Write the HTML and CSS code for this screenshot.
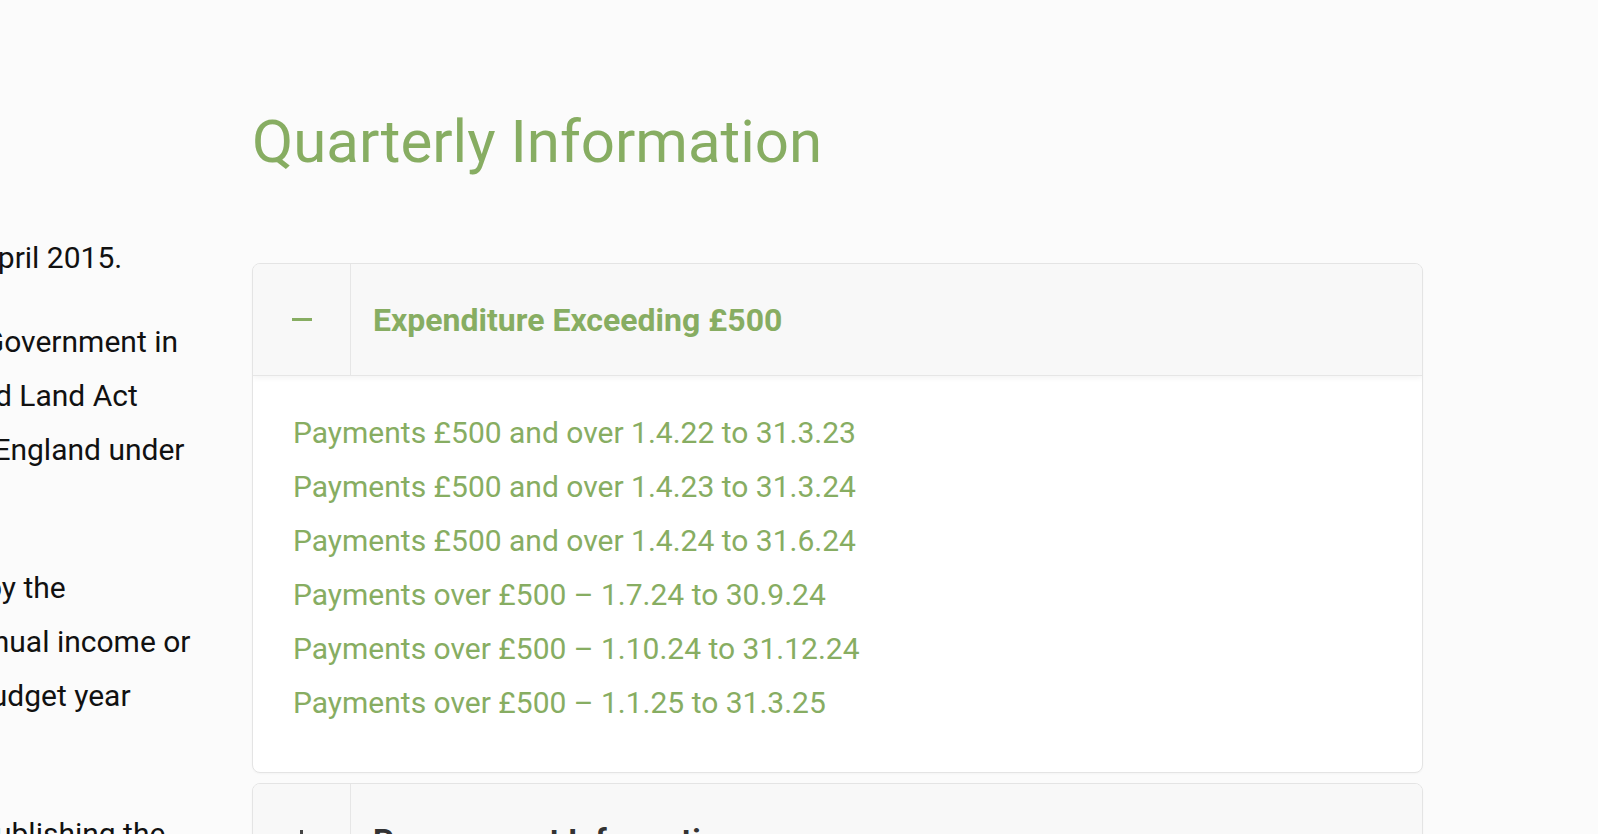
FILE: index.html
```html
<!DOCTYPE html>
<html lang="en">
<head>
<meta charset="utf-8">
<title>Quarterly Information</title>
<link rel="stylesheet" href="styles.css">
</head>
<body>
<div class="layout">
  <aside class="sidebar">
    <p><span class="ln">The Transparency Code for small authorities came into force on 1 April 2015.</span></p>
    <p>
      <span class="ln">It was issued by the Secretary of State for Communities and Local Government in</span>
      <span class="ln">exercise of powers under s. 2 of the Local Government, Planning and Land Act</span>
      <span class="ln">1980 on the publication of information by the smaller authorities in England under</span>
      <span class="ln">the Local Audit and Accountability Act 2014.</span>
    </p>
    <p>
      <span class="ln">This Code applies to parish councils and other authorities covered by the</span>
      <span class="ln">Accounts and Audit Regulations 2015, which have either a gross annual income or</span>
      <span class="ln">expenditure (whichever is higher) not exceeding £25,000 for each budget year</span>
      <span class="ln">ending 31 March.</span>
    </p>
    <p>
      <span class="ln">To comply with the Code, this Parish Council is fully committed to publishing the</span>
      <span class="ln">information listed on this page on its website.</span>
    </p>
  </aside>
  <main class="main">
    <h1 class="title">Quarterly Information</h1>
    <section class="acc acc-open">
      <div class="acc-head">
        <div class="acc-icon"><span class="minus"></span></div>
        <div class="acc-title">Expenditure Exceeding £500</div>
      </div>
      <div class="acc-body">
        <a class="doc" href="#">Payments £500 and over 1.4.22 to 31.3.23</a>
        <a class="doc" href="#">Payments £500 and over 1.4.23 to 31.3.24</a>
        <a class="doc" href="#">Payments £500 and over 1.4.24 to 31.6.24</a>
        <a class="doc" href="#">Payments over £500 – 1.7.24 to 30.9.24</a>
        <a class="doc" href="#">Payments over £500 – 1.10.24 to 31.12.24</a>
        <a class="doc" href="#">Payments over £500 – 1.1.25 to 31.3.25</a>
      </div>
    </section>
    <section class="acc">
      <div class="acc-head">
        <div class="acc-icon"><span class="plus"></span></div>
        <div class="acc-title acc-title-closed">Procurement Information</div>
      </div>
    </section>
  </main>
</div>
</body>
</html>
```
FILE: styles.css
```css
html, body {
  margin: 0;
  padding: 0;
}

body {
  background: #fbfbfb;
  font-family: Roboto, "Liberation Sans", sans-serif;
  color: #111;
  overflow: hidden;
}

.layout {
  display: flex;
  align-items: flex-start;
}

.sidebar {
  flex: none;
  width: 1100px;
  margin-left: -900px;
  padding-top: 231px;
  font-size: 30px;
  line-height: 54px;
  color: #111;
}

.sidebar p {
  margin: 0 0 30px;
}

.ln {
  display: block;
  width: max-content;
  white-space: nowrap;
}

.main {
  flex: none;
  width: 1171px;
  margin-left: 52px;
}

.title {
  margin: 0 0 85px;
  padding-top: 106px;
  font-size: 60px;
  line-height: 72px;
  font-weight: 400;
  color: #87ad62;
}

.acc {
  border: 1px solid #e4e4e4;
  border-radius: 8px;
  overflow: hidden;
  background: #fff;
  margin-bottom: 10px;
  box-shadow: 0 1px 2px rgba(0, 0, 0, 0.03);
}

.acc-head {
  display: flex;
  height: 111px;
  background: #f8f8f8;
}

.acc-open .acc-head {
  border-bottom: 1px solid #e6e6e6;
  box-shadow: 0 2px 6px rgba(0, 0, 0, 0.05);
  position: relative;
}

.acc-icon {
  flex: none;
  width: 97px;
  border-right: 1px solid #e6e6e6;
  display: flex;
  align-items: center;
  justify-content: center;
}

.minus {
  display: block;
  width: 20px;
  height: 3px;
  background: #87ad62;
}

.plus {
  display: block;
  position: relative;
  width: 20px;
  height: 20px;
}

.plus::before,
.plus::after {
  content: "";
  position: absolute;
  background: #444;
}

.plus::before {
  left: 0;
  right: 0;
  top: 8.5px;
  height: 3px;
}

.plus::after {
  top: 0;
  bottom: 0;
  left: 8.5px;
  width: 3px;
}

.acc-title {
  display: flex;
  align-items: center;
  padding-left: 22px;
  font-size: 32px;
  font-weight: 700;
  color: #87ad62;
}

.acc-title-closed {
  color: #333;
}

.acc-body {
  padding: 30px 40px 42px;
  display: flex;
  flex-direction: column;
  align-items: flex-start;
}

.doc {
  font-size: 30px;
  line-height: 54px;
  color: #87ad62;
  text-decoration: none;
}
```
